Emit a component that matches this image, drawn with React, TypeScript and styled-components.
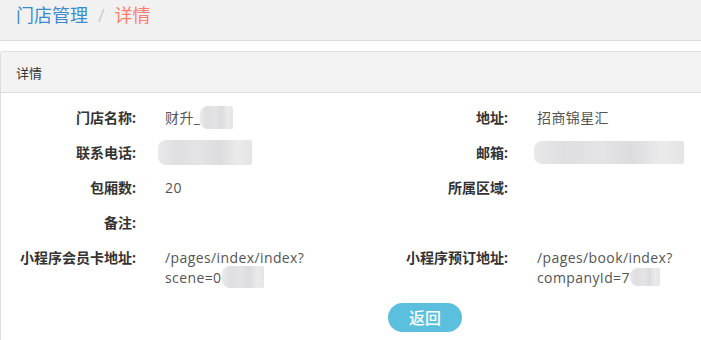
import React from 'react'
import styled, { createGlobalStyle } from 'styled-components'

const GlobalStyle = createGlobalStyle`
  html, body {
    margin: 0;
    padding: 0;
    background: #fff;
  }
  body {
    font-family: "Open Sans", "Noto Sans CJK SC", sans-serif;
    color: #333;
  }
`

const Page = styled.div`
  width: 701px;
  height: 340px;
  overflow: hidden;
`

const Breadcrumb = styled.div`
  height: 41px;
  box-sizing: border-box;
  padding: 3px 0 0 16px;
  background: #f1f1f1;
  border-bottom: 1px solid #ddd;
  font-size: 18px;
  line-height: 24px;
  display: flex;
  gap: 10px;
`

const Crumb = styled.span<{ $active?: boolean }>`
  color: ${(p) => (p.$active ? '#fb7d6c' : '#3d8bcf')};
`

const Divider = styled.span`
  color: #ccc;
`

const Panel = styled.section`
  margin-top: 10px;
  border: 1px solid #ddd;
  border-right: none;
  border-radius: 3px 0 0 3px;
`

const PanelHeading = styled.div`
  height: 41px;
  box-sizing: border-box;
  padding-left: 15px;
  display: flex;
  align-items: center;
  background: #f3f3f3;
  border-bottom: 1px solid #ddd;
  font-size: 13px;
  color: #333;
`

const PanelBody = styled.div`
  padding: 7px 0 7px;
  display: grid;
  grid-template-columns: 372px 1fr;
`

const Field = styled.div`
  display: grid;
  grid-template-columns: 135px 1fr;
  column-gap: 29px;
  min-height: 35px;
  padding-top: 8px;
  box-sizing: border-box;
  line-height: 20px;
`

const Label = styled.span`
  text-align: right;
  font-weight: 700;
  font-size: 14px;
  color: #333;
`

const Value = styled.span`
  font-size: 14px;
  letter-spacing: 0.4px;
  color: #555;
`

const Blur = styled.span<{ $w: number; $h: number; $shift?: number }>`
  display: inline-block;
  vertical-align: middle;
  width: ${(p) => p.$w}px;
  height: ${(p) => p.$h}px;
  margin-left: ${(p) => p.$shift ?? 0}px;
  margin-top: -4px;
  border-radius: 8px 2px 2px 8px;
  background:
    linear-gradient(90deg, #e9e9ea 0%, #dfdfe1 20%, #e4e4e6 45%, #dcdcde 65%, #ebebec 85%, #e4e4e5 100%);
  filter: blur(0.6px);
`

const Actions = styled.div`
  padding: 8px 0 0 387px;
  height: 60px;
`

const BackButton = styled.button`
  width: 74px;
  height: 29px;
  border: none;
  border-radius: 15px;
  background: #5bc0de;
  color: #fff;
  font-family: "Noto Sans CJK SC", sans-serif;
  font-size: 16px;
  font-weight: 500;
  line-height: 29px;
  padding: 0;
  cursor: pointer;
`

export default function App() {
  return (
    <Page>
      <GlobalStyle />
      <Breadcrumb>
        <Crumb>门店管理</Crumb>
        <Divider>/</Divider>
        <Crumb $active>详情</Crumb>
      </Breadcrumb>
      <Panel>
        <PanelHeading>详情</PanelHeading>
        <PanelBody>
          <Field>
            <Label>门店名称:</Label>
            <Value>
              财升_<Blur $w={33} $h={23} />
            </Value>
          </Field>
          <Field>
            <Label>地址:</Label>
            <Value>招商锦星汇</Value>
          </Field>
          <Field>
            <Label>联系电话:</Label>
            <Value>
              <Blur $w={94} $h={25} $shift={-7} />
            </Value>
          </Field>
          <Field>
            <Label>邮箱:</Label>
            <Value>
              <Blur $w={150} $h={23} $shift={-3} />
            </Value>
          </Field>
          <Field>
            <Label>包厢数:</Label>
            <Value>20</Value>
          </Field>
          <Field>
            <Label>所属区域:</Label>
            <Value />
          </Field>
          <Field>
            <Label>备注:</Label>
            <Value />
          </Field>
          <Field />
          <Field>
            <Label>小程序会员卡地址:</Label>
            <Value>
              /pages/index/index?
              <br />
              scene=0<Blur $w={42} $h={22} />
            </Value>
          </Field>
          <Field>
            <Label>小程序预订地址:</Label>
            <Value>
              /pages/book/index?
              <br />
              companyId=7<Blur $w={30} $h={18} />
            </Value>
          </Field>
        </PanelBody>
        <Actions>
          <BackButton>返回</BackButton>
        </Actions>
      </Panel>
    </Page>
  )
}
